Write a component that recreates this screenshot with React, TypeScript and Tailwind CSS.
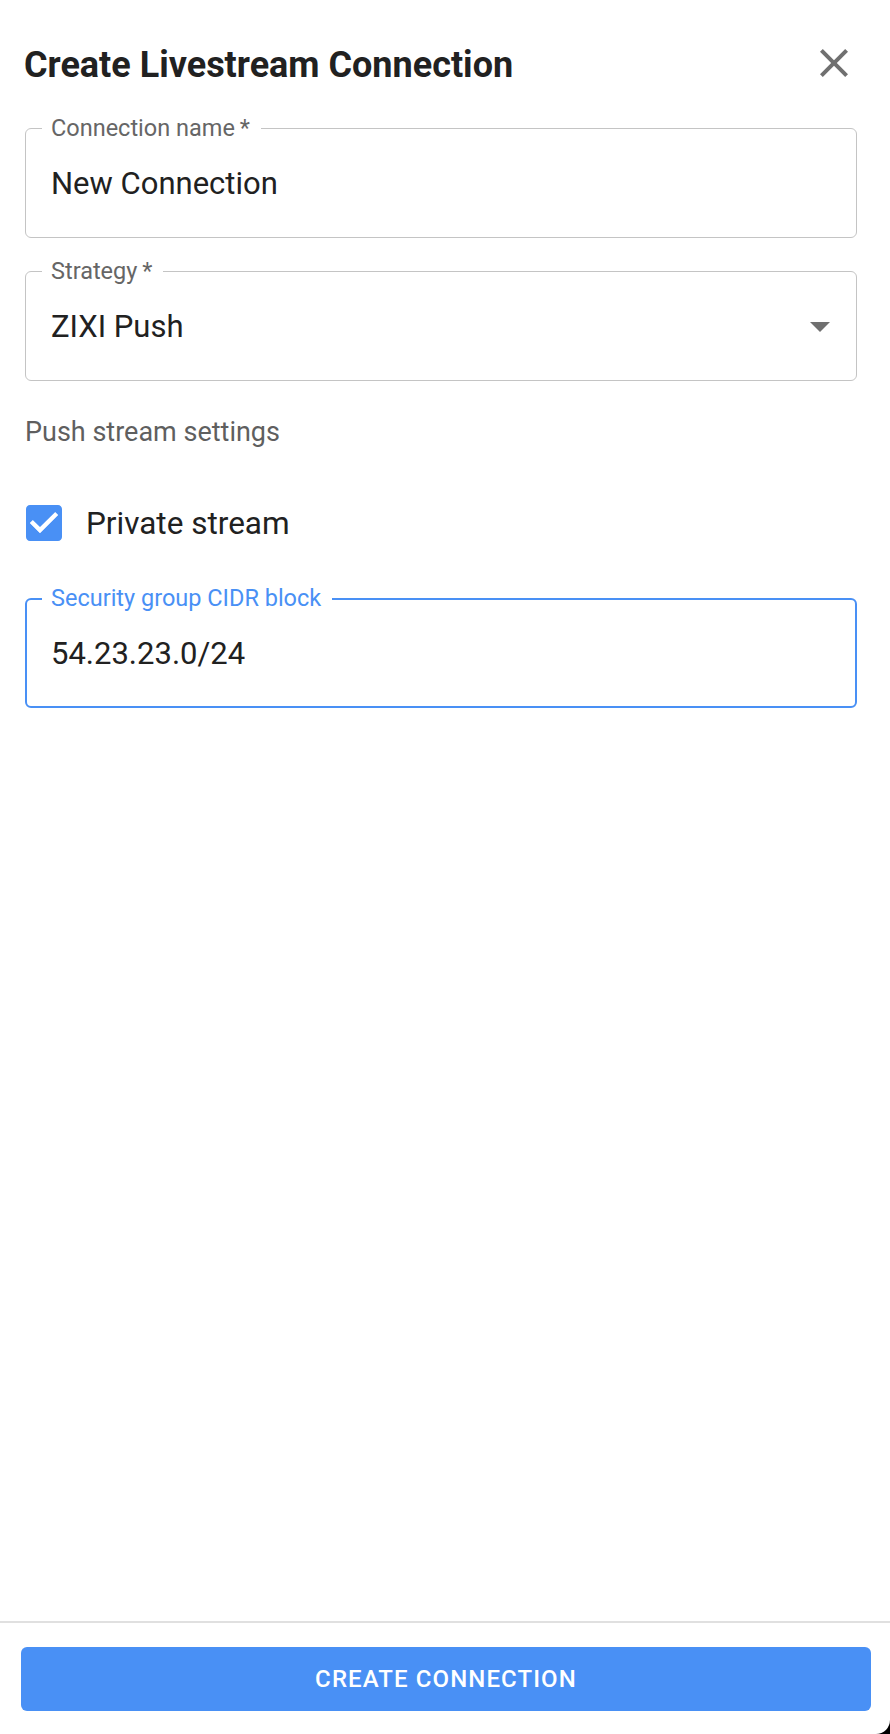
import React from "react";

function CloseIcon() {
  return (
    <svg width="48" height="48" viewBox="0 0 24 24" className="block">
      <path
        fill="#707070"
        d="M19 6.41 17.59 5 12 10.59 6.41 5 5 6.41 10.59 12 5 17.59 6.41 19 12 13.41 17.59 19 19 17.59 13.41 12z"
      />
    </svg>
  );
}

function ArrowDrop() {
  return (
    <svg width="48" height="48" viewBox="0 0 24 24" className="block shrink-0">
      <path fill="#707070" d="M7 10l5 5 5-5z" />
    </svg>
  );
}

function CheckIcon() {
  return (
    <svg width="48" height="48" viewBox="0 0 24 24" className="block shrink-0">
      <path
        fill="#4990f5"
        d="M19 3H5c-1.11 0-2 .9-2 2v14c0 1.1.89 2 2 2h14c1.11 0 2-.9 2-2V5c0-1.1-.89-2-2-2zm-9 14l-5-5 1.41-1.41L10 14.17l7.59-7.59L19 8l-9 9z"
      />
      <path fill="#ffffff" d="M10 17l-5-5 1.41-1.41L10 14.17l7.59-7.59L19 8l-9 9z" />
    </svg>
  );
}

export default function App() {
  return (
    <div className="w-[890px] h-[1734px] bg-black font-['Roboto','Liberation_Sans',sans-serif]">
      <div className="w-full h-full bg-white rounded-br-[14px] flex flex-col">
        <div className="flex-1 pl-[25px] pr-[33px] pt-[44px] flex flex-col">
          {/* Header */}
          <div className="flex items-start justify-between h-[42px]">
            <h2 className="text-[36px] leading-[42px] font-bold text-[#212121] -ml-[1px]">
              Create Livestream Connection
            </h2>
            <button className="-mt-[5px] -mr-[1px]" aria-label="close">
              <CloseIcon />
            </button>
          </div>

          {/* Connection name */}
          <div className="relative mt-[42px] h-[110px] border border-[#c4c4c4] rounded-[6px] flex items-center pl-[25px] pt-[2px]">
            <span className="absolute left-[16px] top-[-14px] bg-white pl-[9px] pr-[11px] text-[23.5px] leading-[27px] text-[#666666]">
              Connection name{"\u2009"}*
            </span>
            <span className="text-[31px] leading-[36px] text-[#212121]">New Connection</span>
          </div>

          {/* Strategy */}
          <div className="relative mt-[33px] h-[110px] border border-[#c4c4c4] rounded-[6px] flex items-center pl-[25px] pr-[12px]">
            <span className="absolute left-[16px] top-[-14px] bg-white pl-[9px] pr-[11px] text-[23.5px] leading-[27px] text-[#666666]">
              Strategy{"\u2009"}*
            </span>
            <span className="flex-1 text-[31px] leading-[36px] text-[#212121] pt-[2px]">ZIXI Push</span>
            <ArrowDrop />
          </div>

          {/* Section title */}
          <div className="mt-[36px] text-[27px] leading-[31px] text-[#5f5f5f]">Push stream settings</div>

          {/* Checkbox */}
          <div className="mt-[57px] h-[36px] flex items-center">
            <div className="w-[36px] h-[36px] flex items-center justify-center overflow-visible ml-[1px]">
              <CheckIcon />
            </div>
            <span className="ml-[24px] text-[31.5px] leading-[36px] text-[#212121] pt-[1px]">Private stream</span>
          </div>

          {/* CIDR */}
          <div className="relative mt-[57px] h-[110px] border-2 border-[#4990f5] rounded-[6px] flex items-center pl-[24px] pt-[2px]">
            <span className="absolute left-[15px] top-[-15px] bg-white pl-[9px] pr-[11px] text-[23.5px] leading-[27px] text-[#4990f5]">
              Security group CIDR block
            </span>
            <span className="text-[31px] leading-[36px] text-[#212121]">54.23.23.0/24</span>
          </div>
        </div>

        {/* Footer */}
        <div className="border-t-2 border-[#e0e0e0] pt-[24px] pb-[23px] pl-[21px] pr-[19px]">
          <button className="w-full h-[64px] bg-[#4990f5] rounded-[6px] text-white text-[24px] font-medium tracking-[1.1px] flex items-center justify-center">
            CREATE CONNECTION
          </button>
        </div>
      </div>
    </div>
  );
}
